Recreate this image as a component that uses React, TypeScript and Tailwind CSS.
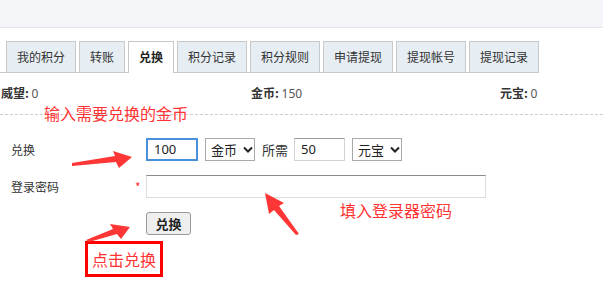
const tabs = ["我的积分", "转账", "兑换", "积分记录", "积分规则", "申请提现", "提现帐号", "提现记录"];

function Chevron() {
  return (
    <svg width="10" height="7" viewBox="0 0 10 7" className="ml-[6px]">
      <path d="M1 1.5 L5 5.5 L9 1.5" fill="none" stroke="#222" strokeWidth="2" />
    </svg>
  );
}

function Select({ label }: { label: string }) {
  return (
    <div className="flex h-[23px] w-[50px] items-center border border-[#a9a9a9] bg-white pl-[5px] text-[13px] text-[#222]">
      {label}
      <Chevron />
    </div>
  );
}

export default function App() {
  return (
    <div className="relative h-[283px] w-[603px] overflow-hidden bg-white font-['Noto_Sans_CJK_SC','Liberation_Sans',sans-serif] text-[12px] text-[#333]">
      {/* 顶部 */}
      <div className="h-[28px] border-b border-[#e4e6ea] bg-[#f4f5f8]" />

      {/* 标签 */}
      <div className="mt-[13px] flex w-[539px] items-end gap-[3px] border-b border-[#c9c9c9] pl-[6px]">
        {tabs.map((t) =>
          t === "兑换" ? (
            <div
              key={t}
              className="-mb-px flex h-[32px] items-center border border-b-0 border-[#c9c9c9] bg-white px-[10px] pb-px font-bold text-[#222]"
            >
              {t}
            </div>
          ) : (
            <div
              key={t}
              className="flex h-[31px] items-center border border-b-0 border-[#c9c9c9] bg-[#e6edf3] px-[10px]"
            >
              {t}
            </div>
          )
        )}
      </div>

      {/* 统计 */}
      <div className="flex border-b border-dashed border-[#cfcfcf] py-[12px] leading-[16px]">
        <div className="w-[251px] pl-[1px]">
          <span className="font-bold text-[#333]">威望:</span>{" "}
          <span className="font-['Noto_Sans',sans-serif] text-[#555]">0</span>
        </div>
        <div className="w-[249px]">
          <span className="font-bold text-[#333]">金币:</span>{" "}
          <span className="font-['Noto_Sans',sans-serif] text-[#555]">150</span>
        </div>
        <div>
          <span className="font-bold text-[#333]">元宝:</span>{" "}
          <span className="font-['Noto_Sans',sans-serif] text-[#555]">0</span>
        </div>
      </div>

      {/* 表单 */}
      <div className="mt-[23px] flex flex-col gap-[14px] pl-[11px]">
        <div className="flex h-[23px] items-center">
          <div className="w-[135px]">兑换</div>
          <div className="flex h-[23px] w-[52px] items-center border-2 border-[#4a8fdb] bg-white pl-[6px] font-['Noto_Sans',sans-serif] text-[13px] text-[#222]">
            100
          </div>
          <div className="ml-[7px]">
            <Select label="金币" />
          </div>
          <div className="ml-[7px] text-[13px]">所需</div>
          <div className="ml-[6px] flex h-[23px] w-[51px] items-center border border-[#d3d3d3] border-t-[#9a9a9a] bg-white pl-[6px] font-['Noto_Sans',sans-serif] text-[13px] text-[#222]">
            50
          </div>
          <div className="ml-[7px]">
            <Select label="元宝" />
          </div>
        </div>

        <div className="flex h-[23px] items-center">
          <div className="w-[124px]">登录密码</div>
          <div className="w-[11px] text-[#ff3333]">*</div>
          <div className="h-[23px] w-[340px] border border-[#dcdcdc] border-t-[#8a8a8a] bg-white" />
        </div>

        <div className="pl-[135px]">
          <button className="flex h-[23px] w-[45px] items-center justify-center rounded-[3px] border border-[#999] bg-[#efefef] text-[13px] font-bold text-[#222]">
            兑换
          </button>
        </div>
      </div>

      {/* 标注 */}
      <div className="absolute left-[44px] top-[102px] text-[16px] leading-[22px] text-[#ff3333]">输入需要兑换的金币</div>
      <div className="absolute left-[340px] top-[199px] text-[16px] leading-[22px] text-[#ff3333]">填入登录器密码</div>
      <div className="absolute left-[85px] top-[241px] flex h-[36px] w-[78px] items-center justify-center border-[3px] border-[#ff0000] text-[16px] text-[#ff3333]">
        点击兑换
      </div>

      <svg className="pointer-events-none absolute left-0 top-0" width="603" height="283">
        <polygon points="72,163 115,156 113,151 132,157 119,168 116,162 72,166" fill="#ff3636" />
        <polygon points="265,193 284,203 279,206 299,234 296,235 274,210 269,214" fill="#ff3636" />
        <polygon points="86,240 113,229 110,224 130,227 121,239 117,234 89,242" fill="#ff3636" />
      </svg>
    </div>
  );
}
